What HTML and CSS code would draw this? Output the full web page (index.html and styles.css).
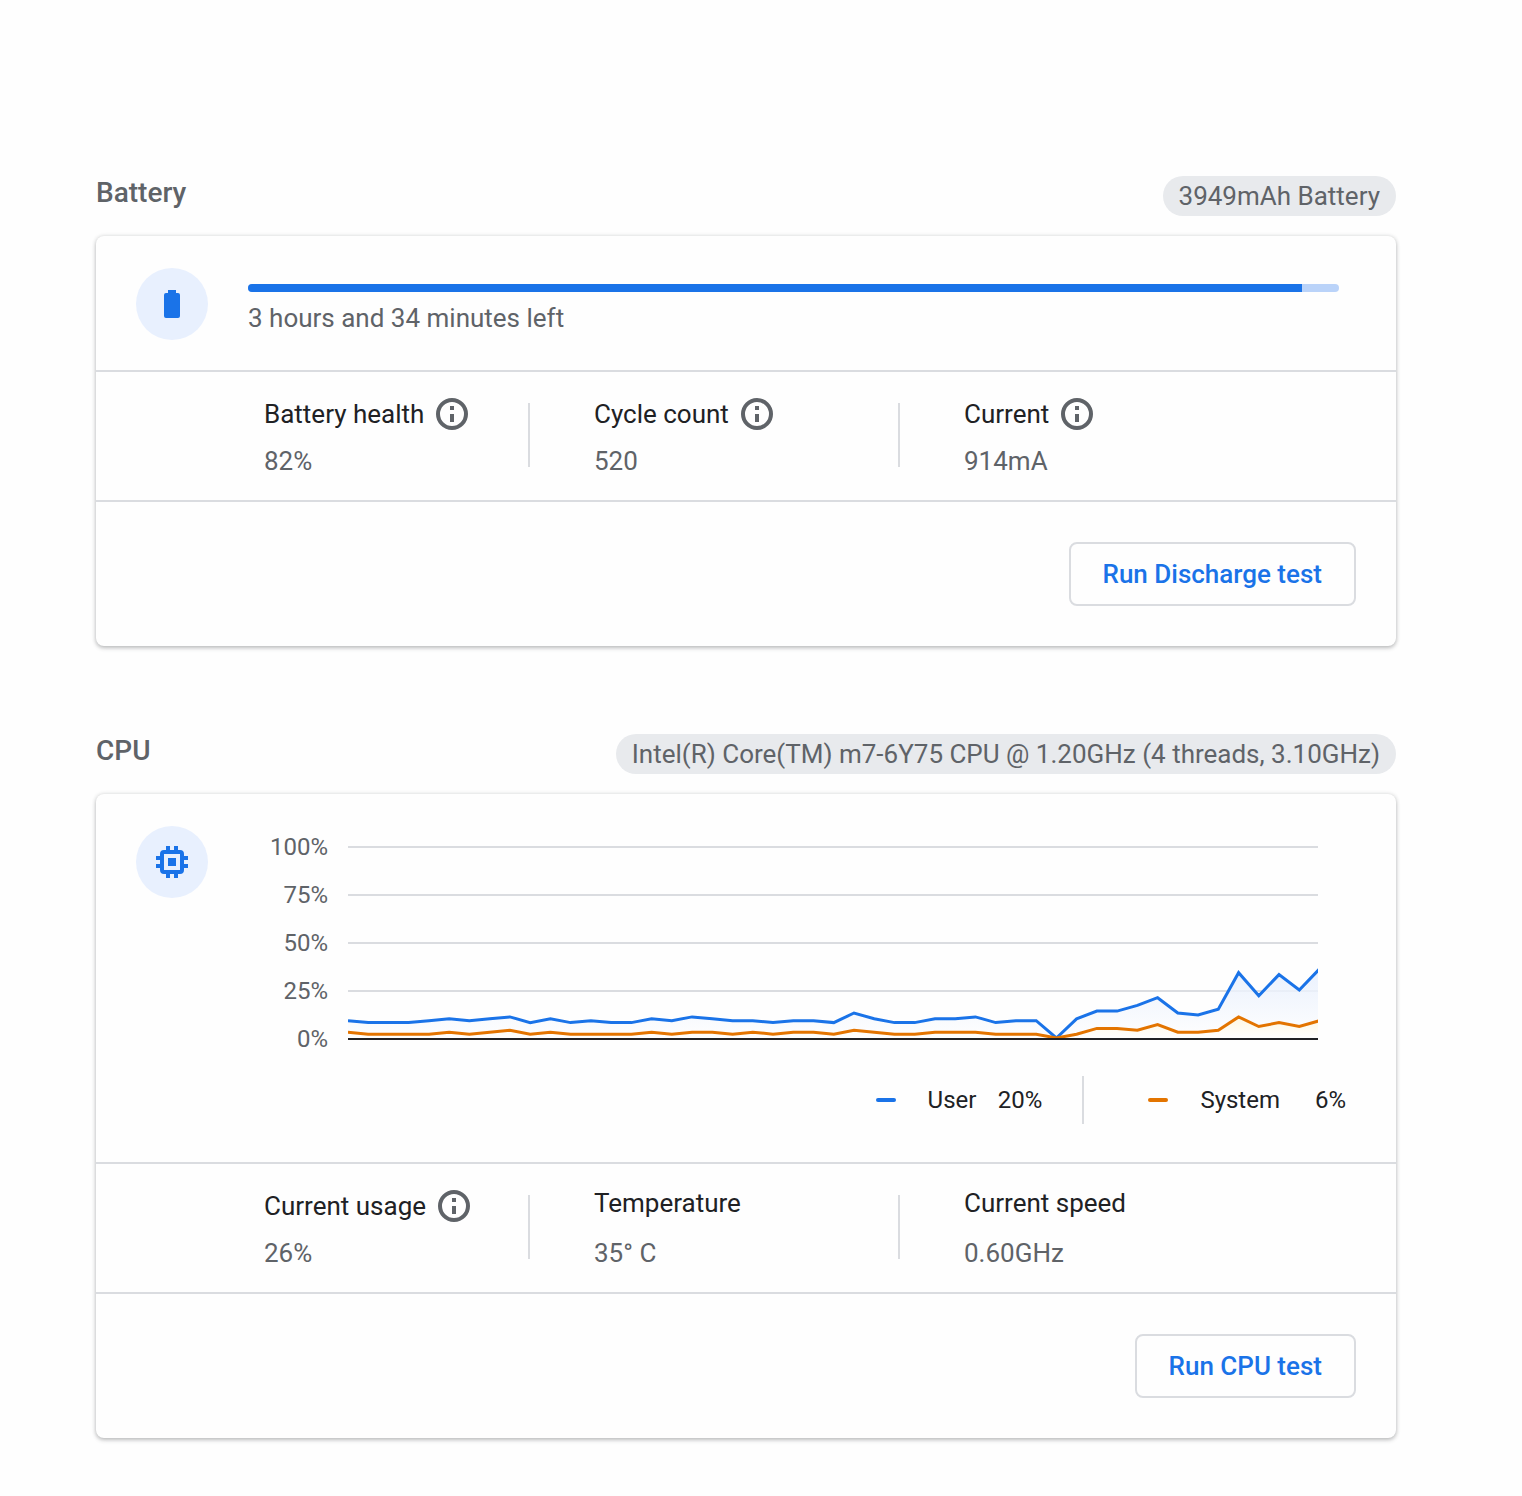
FILE: index.html
```html
<!DOCTYPE html>
<html lang="en">
  <head>
    <meta charset="UTF-8" />
    <meta name="viewport" content="width=device-width, initial-scale=1.0" />
    <title>Diagnostics</title>
    <link rel="stylesheet" href="styles.css">
  </head>

  <body>
    <main class="container">
      <section class="device">
        <div class="device_header">
          <h2>Battery</h2>
          <span class="chip">3949mAh Battery</span>
        </div>
        <div class="card">
          <div class="overview">
            <div class="icon">
              <svg width="32" height="32" viewBox="0 0 32 32">
                <path d="M12 2h8v3h2a2 2 0 0 1 2 2v21a2 2 0 0 1-2 2H10a2 2 0 0 1-2-2V7a2 2 0 0 1 2-2h2z" />
              </svg>
            </div>
            <div class="charge">
              <div class="bar" role="progressbar" aria-label="Charge" aria-valuenow="97">
                <div class="bar_fill" style="width: 96.6%"></div>
              </div>
              <p>3 hours and 34 minutes left</p>
            </div>
          </div>
          <div class="stats">
            <div class="stat">
              <div class="stat_text">
                <div class="stat_label">
                  Battery health
                  <button class="info" aria-label="About battery health">
                    <svg width="32" height="32" viewBox="0 0 32 32">
                      <circle cx="16" cy="16" r="14" />
                      <path d="M14 8h4v4h-4zM14 16h4v8h-4z" />
                    </svg>
                  </button>
                </div>
                <p>82%</p>
              </div>
            </div>
            <div class="stat">
              <div class="stat_text">
                <div class="stat_label">
                  Cycle count
                  <button class="info" aria-label="About cycle count">
                    <svg width="32" height="32" viewBox="0 0 32 32">
                      <circle cx="16" cy="16" r="14" />
                      <path d="M14 8h4v4h-4zM14 16h4v8h-4z" />
                    </svg>
                  </button>
                </div>
                <p>520</p>
              </div>
            </div>
            <div class="stat">
              <div class="stat_text">
                <div class="stat_label">
                  Current
                  <button class="info" aria-label="About current">
                    <svg width="32" height="32" viewBox="0 0 32 32">
                      <circle cx="16" cy="16" r="14" />
                      <path d="M14 8h4v4h-4zM14 16h4v8h-4z" />
                    </svg>
                  </button>
                </div>
                <p>914mA</p>
              </div>
            </div>
          </div>
          <div class="actions">
            <button class="run">Run Discharge test</button>
          </div>
        </div>
      </section>

      <section class="device">
        <div class="device_header">
          <h2>CPU</h2>
          <span class="chip">Intel(R) Core(TM) m7-6Y75 CPU @ 1.20GHz (4 threads, 3.10GHz)</span>
        </div>
        <div class="card">
          <div class="overview cpu">
            <div class="icon">
              <svg width="32" height="32" viewBox="0 0 32 32">
                <path fill-rule="evenodd" d="M10 0h4v4h4V0h4v4h2a4 4 0 0 1 4 4v2h4v4h-4v4h4v4h-4v2a4 4 0 0 1-4 4h-2v4h-4v-4h-4v4h-4v-4H8a4 4 0 0 1-4-4v-2H0v-4h4v-4H0v-4h4V8a4 4 0 0 1 4-4h2zM8 8v16h16V8z" />
                <path d="M12 12h8v8h-8z" />
              </svg>
            </div>
            <div class="usage">
              <div class="chart">
                <div class="chart_labels">
                  <span>100%</span>
                  <span>75%</span>
                  <span>50%</span>
                  <span>25%</span>
                  <span>0%</span>
                </div>
                <svg class="chart_plot" viewBox="0 0 970 194" preserveAspectRatio="none">
                  <defs>
                    <linearGradient id="userFill" gradientUnits="userSpaceOnUse" x1="0" y1="120" x2="0" y2="192">
                      <stop offset="0" stop-color="#e4edfd" />
                      <stop offset="1" stop-color="#fefefe" />
                    </linearGradient>
                    <linearGradient id="systemFill" gradientUnits="userSpaceOnUse" x1="0" y1="170" x2="0" y2="192">
                      <stop offset="0" stop-color="#fef7e0" />
                      <stop offset="1" stop-color="#fefefe" />
                    </linearGradient>
                  </defs>
                  <path class="grid_line" d="M0 1H970M0 49H970M0 97H970M0 145H970" />
                  <path class="user_area" />
                  <path class="user_line" />
                  <path class="system_area" />
                  <path class="system_line" />
                  <path class="axis_line" d="M0 193H970" />
                </svg>
              </div>
              <div class="legend">
                <div class="legend_item user">
                  <span>User</span>
                  <span class="legend_value">20%</span>
                </div>
                <div class="legend_item system">
                  <span>System</span>
                  <span class="legend_value">6%</span>
                </div>
              </div>
            </div>
          </div>
          <div class="stats">
            <div class="stat">
              <div class="stat_text">
                <div class="stat_label">
                  Current usage
                  <button class="info" aria-label="About current usage">
                    <svg width="32" height="32" viewBox="0 0 32 32">
                      <circle cx="16" cy="16" r="14" />
                      <path d="M14 8h4v4h-4zM14 16h4v8h-4z" />
                    </svg>
                  </button>
                </div>
                <p>26%</p>
              </div>
            </div>
            <div class="stat">
              <div class="stat_text">
                <div class="stat_label">Temperature</div>
                <p>35° C</p>
              </div>
            </div>
            <div class="stat">
              <div class="stat_text">
                <div class="stat_label">Current speed</div>
                <p>0.60GHz</p>
              </div>
            </div>
          </div>
          <div class="actions">
            <button class="run">Run CPU test</button>
          </div>
        </div>
      </section>
    </main>

    <script>
      const userData = [
        9, 8, 8, 8, 9, 10, 9, 10, 11, 8, 10, 8, 9, 8, 8, 10, 9, 11, 10, 9, 9, 8,
        9, 9, 8, 13, 10, 8, 8, 10, 10, 11, 8, 9, 9, 0, 10, 14, 14, 17, 21, 13,
        12, 15, 34, 22, 33, 25, 36,
      ];
      const systemData = [
        3, 2, 2, 2, 2, 3, 2, 3, 4, 2, 3, 2, 2, 2, 2, 3, 2, 3, 3, 2, 3, 2, 3, 3,
        2, 4, 3, 2, 2, 3, 3, 3, 2, 2, 2, 0, 2, 5, 5, 4, 7, 3, 3, 4, 11, 6, 8, 6,
        9,
      ];
      const step = 20.24;
      const bottom = 192;

      function draw(name, data) {
        const points = data.map(
          (value, index) => `${(index * step).toFixed(1)} ${(bottom - value * 1.92).toFixed(1)}`
        );
        const line = "M" + points.join("L");
        document.querySelector(`.${name}_line`).setAttribute("d", line);
        //close the line down to the axis for the fill
        document
          .querySelector(`.${name}_area`)
          .setAttribute("d", `${line}V${bottom}H0Z`);
      }

      draw("user", userData);
      draw("system", systemData);
    </script>
  </body>
</html>
```
FILE: styles.css
```css
* {
  padding: 0;
  margin: 0;
  box-sizing: border-box;
}

body {
  font-family: Roboto, "Liberation Sans", sans-serif;
  font-size: 26px;
  line-height: 30px;
  color: #5f6368;
  background: #fefefe;
}

.container {
  padding: 176px 126px 56px 96px;
}

.device + .device {
  margin-top: 88px;
}

.device_header {
  display: flex;
  justify-content: space-between;
  align-items: flex-start;
  margin-bottom: 20px;
}

h2 {
  font-size: 28px;
  line-height: 34px;
  font-weight: 500;
}

.chip {
  padding: 0 16px;
  line-height: 40px;
  border-radius: 20px;
  background: #e8eaed;
}

.card {
  border-radius: 8px;
  background: #fefefe;
  box-shadow: 0 2px 4px rgba(60, 64, 67, 0.3), 0 0 4px rgba(60, 64, 67, 0.15);
}

.overview {
  display: flex;
  gap: 40px;
  padding: 32px 57px 30px 40px;
  border-bottom: 2px solid #dadce0;
}

.overview.cpu {
  padding-right: 50px;
  padding-bottom: 38px;
}

.icon {
  display: flex;
  align-items: center;
  justify-content: center;
  flex-shrink: 0;
  width: 72px;
  height: 72px;
  border-radius: 50%;
  background: #e8f0fe;
  fill: #1a73e8;
}

.charge {
  flex: 1;
  padding-top: 16px;
}

.bar {
  height: 8px;
  margin-bottom: 11px;
  border-radius: 4px;
  background: #bad3f9;
  overflow: hidden;
}

.bar_fill {
  height: 100%;
  background: #1a73e8;
}

.stats {
  display: grid;
  grid-template-columns: 330fr 370fr 496fr;
  padding: 0 0 2px 104px;
  border-bottom: 2px solid #dadce0;
}

.stat {
  display: flex;
  align-items: center;
}

.stat:not(:last-child)::after {
  content: "";
  width: 2px;
  height: 64px;
  background: #dadce0;
}

.stat_text {
  display: flex;
  flex-direction: column;
  justify-content: space-between;
  flex: 1;
  height: 126px;
  padding: 26px 0 22px 64px;
}

.stat_label {
  display: flex;
  align-items: center;
  gap: 12px;
  line-height: 26px;
  color: #202124;
}

.info {
  width: 32px;
  height: 32px;
  border: none;
  background: none;
  cursor: pointer;
}

.info svg {
  display: block;
  fill: #5f6368;
}

.info circle {
  fill: none;
  stroke: #5f6368;
  stroke-width: 4;
}

.actions {
  display: flex;
  justify-content: flex-end;
  padding: 40px;
}

.run {
  height: 64px;
  padding: 0 32px;
  border: 2px solid #dadce0;
  border-radius: 8px;
  font-family: inherit;
  font-size: 26px;
  font-weight: 500;
  color: #1a73e8;
  background: none;
  cursor: pointer;
}

.usage {
  flex: 1;
  min-width: 0;
  padding-top: 8px;
  font-size: 24px;
}

.chart {
  display: flex;
  gap: 20px;
  padding-right: 28px;
}

.chart_labels {
  display: flex;
  flex-direction: column;
  justify-content: space-between;
  width: 80px;
  line-height: 26px;
  text-align: right;
}

.chart_plot {
  flex: 1;
  min-width: 0;
  height: 194px;
  margin: 12px 0;
}

.chart_plot path {
  fill: none;
  vector-effect: non-scaling-stroke;
}

.chart_plot .grid_line {
  stroke: #dadce0;
  stroke-width: 2;
}

.chart_plot .axis_line {
  stroke: #202124;
  stroke-width: 2;
}

.chart_plot .user_line {
  stroke: #1a73e8;
  stroke-width: 3;
}

.chart_plot .system_line {
  stroke: #e37400;
  stroke-width: 3;
}

.chart_plot .user_area {
  fill: url(#userFill);
  fill-opacity: 0.8;
}

.chart_plot .system_area {
  fill: url(#systemFill);
}

.legend {
  display: flex;
  justify-content: flex-end;
  margin-top: 24px;
  color: #202124;
}

.legend_item {
  display: flex;
  align-items: center;
  height: 48px;
}

.legend_item::before {
  content: "";
  width: 20px;
  height: 4px;
  margin-right: 32px;
  border-radius: 2px;
}

.legend_item.user::before {
  background: #1a73e8;
}

.legend_item.system::before {
  background: #e37400;
}

.legend_item + .legend_item {
  margin-left: 40px;
  padding-left: 64px;
  border-left: 2px solid #dadce0;
}

.legend_value {
  width: 66px;
  text-align: right;
}
```
